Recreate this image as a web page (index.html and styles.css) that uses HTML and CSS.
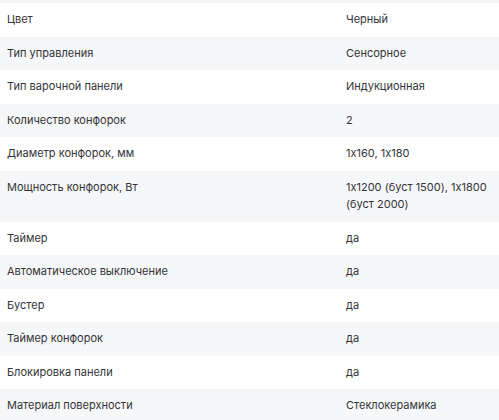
FILE: index.html
```html
<!DOCTYPE html>
<html lang="ru">
<head>
<meta charset="utf-8">
<link rel="stylesheet" href="styles.css">
</head>
<body>
<div class="specs">
  <div class="top-strip"></div>
  <div class="row"><div class="label">Цвет</div><div class="value">Черный</div></div>
  <div class="row"><div class="label">Тип управления</div><div class="value">Сенсорное</div></div>
  <div class="row"><div class="label">Тип варочной панели</div><div class="value">Индукционная</div></div>
  <div class="row"><div class="label">Количество конфорок</div><div class="value">2</div></div>
  <div class="row"><div class="label">Диаметр конфорок, мм</div><div class="value">1x160, 1x180</div></div>
  <div class="row"><div class="label">Мощность конфорок, Вт</div><div class="value">1x1200 (буст 1500), 1x1800 (буст 2000)</div></div>
  <div class="row"><div class="label">Таймер</div><div class="value">да</div></div>
  <div class="row"><div class="label">Автоматическое выключение</div><div class="value">да</div></div>
  <div class="row"><div class="label">Бустер</div><div class="value">да</div></div>
  <div class="row"><div class="label">Таймер конфорок</div><div class="value">да</div></div>
  <div class="row"><div class="label">Блокировка панели</div><div class="value">да</div></div>
  <div class="row"><div class="label">Материал поверхности</div><div class="value">Стеклокерамика</div></div>
</div>
</body>
</html>
```
FILE: styles.css
```css
html, body {
  margin: 0;
  padding: 0;
  background: #ffffff;
}
body {
  font-family: Inter, "Noto Sans", sans-serif;
  font-size: 11px;
  font-feature-settings: "calt" 0;
  color: #333438;
  width: 499px;
  overflow: hidden;
}
.top-strip {
  height: 3px;
  background: #f6f7f9;
}
.row {
  display: grid;
  grid-template-columns: 339px 1fr;
  padding: 8px 4px 8px 7px;
  line-height: 17.5px;
  background: #ffffff;
}
.row:nth-child(odd) {
  background: #f6f7f9;
}
```
